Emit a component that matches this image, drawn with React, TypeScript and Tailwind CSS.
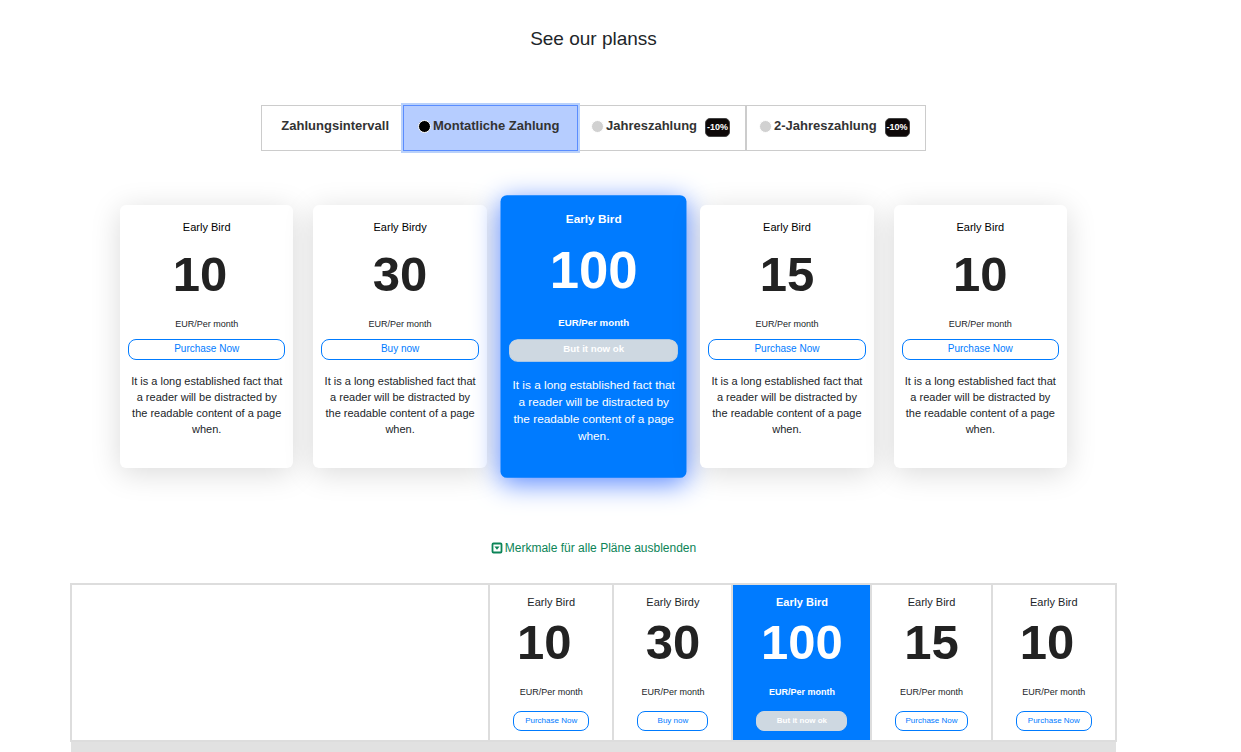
import { useState } from "react";

type Plan = {
  name: string;
  cardPrice: string;
  tablePrice: string;
  action: string;
  featured?: boolean;
};

const plans: Plan[] = [
  { name: "Early Bird", cardPrice: "10\u00a0", tablePrice: "10\u00a0", action: "Purchase Now" },
  { name: "Early Birdy", cardPrice: "30", tablePrice: "30", action: "Buy now" },
  { name: "Early Bird", cardPrice: "100", tablePrice: "100", action: "But it now ok", featured: true },
  { name: "Early Bird", cardPrice: "15", tablePrice: "15", action: "Purchase Now" },
  { name: "Early Bird", cardPrice: "10", tablePrice: "10\u00a0", action: "Purchase Now" },
];

const intervals = [
  { id: "monthly", label: "Montatliche Zahlung", discount: "" },
  { id: "yearly", label: "Jahreszahlung", discount: "-10%" },
  { id: "biyearly", label: "2-Jahreszahlung", discount: "-10%" },
];

function CaretSquareIcon() {
  return (
    <svg viewBox="0 0 12 12" className="size-3" aria-hidden="true">
      <rect x="1.5" y="1.5" width="9" height="9" rx="1" fill="none" stroke="currentColor" strokeWidth="1.8" />
      <path d="M3.4 4.4h5.2L6 7.8z" fill="currentColor" />
    </svg>
  );
}

function PlanCard({ plan }: { plan: Plan }) {
  const f = plan.featured;
  return (
    <article
      className={
        "relative flex min-w-0 flex-1 flex-col items-center rounded-md px-2 pt-3.5 pb-[31px] text-center " +
        (f
          ? "scale-[1.075] bg-[#007bff] font-medium text-white shadow-[0_5px_25px_#5e8cff]"
          : "bg-white text-[#212529] shadow-[0_5px_30px_rgba(0,0,0,0.15)]")
      }
    >
      <h2 className={"text-[11px] leading-4 " + (f ? "font-bold" : "font-medium text-black")}>
        {plan.name}
      </h2>
      <p className={"mt-1 text-[49px] leading-[70px] font-bold " + (f ? "" : "text-[#222]")}>{plan.cardPrice}</p>
      <p className={"mt-2 text-[9px] leading-[14px] " + (f ? "font-bold" : "")}>EUR/Per month</p>
      <button
        className={
          "mt-2 w-full rounded-lg border pb-0.5 leading-[17px] " +
          (f
            ? "border-[#ced8e1] bg-[#ced8e1] text-[9px] font-bold text-white"
            : "border-[#007bff] bg-white text-[10px] text-[#007bff]")
        }
      >
        {plan.action}
      </button>
      <p className="mt-[13px] text-[11px] leading-4">
        It is a long established fact that a reader will be distracted by the readable content of a page when.
      </p>
    </article>
  );
}

function PlanHeading({ plan }: { plan: Plan }) {
  const f = plan.featured;
  return (
    <th
      scope="col"
      className={
        "border-2 border-[#ddd] px-[23px] pt-[7px] pb-[9px] text-center align-top font-normal " +
        (f ? "relative bg-[#007bff] text-white shadow-[0_0_0_1px_#007bff]" : "text-[#212529]")
      }
    >
      <div className={"text-[11px] leading-5 " + (f ? "font-bold" : "font-medium")}>{plan.name}</div>
      <div className={"text-[49px] leading-[60px] font-bold " + (f ? "" : "text-[#222]")}>{plan.tablePrice}</div>
      <div className={"mt-[13px] text-[9px] leading-[14px] whitespace-nowrap " + (f ? "font-bold" : "")}>
        EUR/Per month
      </div>
      <button
        className={
          "mt-3 block h-5 w-full rounded-lg border text-[8px] leading-4 whitespace-nowrap " +
          (f ? "border-[#ced8e1] bg-[#ced8e1] font-bold text-white" : "border-[#007bff] bg-white text-[#007bff]")
        }
      >
        {plan.action}
      </button>
    </th>
  );
}

export default function App() {
  const [billing, setBilling] = useState("monthly");
  const [open, setOpen] = useState(true);
  return (
    <main className="bg-white pr-[124px] pl-[70px] font-['Liberation_Sans',Arial,sans-serif] text-[#212529]">
      <h1 className="pt-[25px] text-center text-[19px] leading-7">See our planss</h1>

      <fieldset
        aria-labelledby="interval-title"
        className="mt-[52px] flex justify-center text-[13px] leading-5 font-bold text-[#333]"
      >
        <div
          id="interval-title"
          className="flex h-[46px] w-[142px] items-start justify-end border border-r-0 border-[#ccc] pt-2.5 pr-3.5"
        >
          Zahlungsintervall
        </div>
        {intervals.map((item, i) => {
          const active = item.id === billing;
          return (
            <label
              key={item.id}
              className={
                "flex h-[46px] cursor-pointer items-start gap-0.5 border pt-2.5 " +
                (i === 0 ? "w-[175px] pl-3.5 " : i === 1 ? "w-[168px] pl-3 " : "w-[180px] pl-3 ") +
                (active
                  ? "relative z-10 border-[#5a8dff] bg-[#b6cdff] shadow-[0_0_0_2px_#b9d1fb]"
                  : "border-[#ccc] bg-white")
              }
            >
              <input
                type="radio"
                name="interval"
                checked={active}
                onChange={() => setBilling(item.id)}
                className="mt-1 size-[13px] shrink-0 appearance-none rounded-full border border-white bg-[#d1d1d1] checked:bg-black"
              />
              <span>{item.label}</span>
              {item.discount && (
                <span className="mt-0.5 ml-1.5 h-[19px] rounded-[5px] border border-[#444] bg-[#0d0808] px-px text-[9px] leading-4 text-white">
                  {item.discount}
                </span>
              )}
            </label>
          );
        })}
      </fieldset>

      <section className="mt-[54px] flex gap-5 px-[50px]">
        {plans.map((plan, i) => (
          <PlanCard key={i} plan={plan} />
        ))}
      </section>

      <div className="mt-[70px] flex justify-center">
        <button
          onClick={() => setOpen(!open)}
          aria-expanded={open}
          className="flex items-center gap-0.5 text-[12px] leading-5 text-[#0b8457]"
        >
          <CaretSquareIcon />
          Merkmale für alle Pläne ausblenden
        </button>
      </div>

      {open && (
        <table className="mt-[25px] w-full table-fixed border-collapse">
          <colgroup>
            <col className="w-[40%]" />
            <col className="w-[11.9%]" />
            <col className="w-[11.4%]" />
            <col className="w-[13.3%]" />
            <col className="w-[11.5%]" />
            <col className="w-[11.9%]" />
          </colgroup>
          <thead>
            <tr>
              <td className="border-2 border-[#ddd]" />
              {plans.map((plan, i) => (
                <PlanHeading key={i} plan={plan} />
              ))}
            </tr>
          </thead>
          <tbody>
            <tr className="bg-[#e1e1e1]">
              <td colSpan={6} className="h-3" />
            </tr>
          </tbody>
        </table>
      )}
    </main>
  );
}
